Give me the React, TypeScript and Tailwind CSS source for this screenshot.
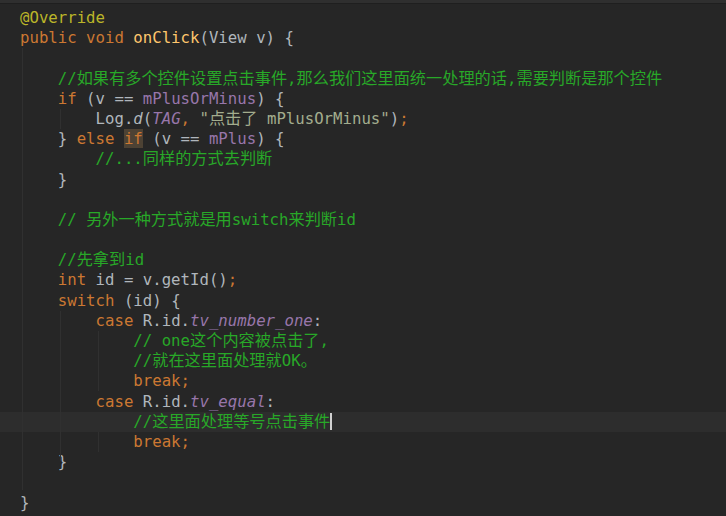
import React from 'react';

// Darcula-ish palette taken from the screenshot
const K = ({ children }: { children: React.ReactNode }) => (
  <span className="text-[#cc7832]">{children}</span>
);
const C = ({ children }: { children: React.ReactNode }) => (
  <span className="text-[#28a828]">{children}</span>
);
const F = ({ children }: { children: React.ReactNode }) => (
  <span className="text-[#9876aa]">{children}</span>
);
const FI = ({ children }: { children: React.ReactNode }) => (
  <span className="text-[#9876aa] italic">{children}</span>
);
// CJK text is a bit wider than the mono font
const Z = ({ children }: { children: React.ReactNode }) => (
  <span className="text-[16.2px]">{children}</span>
);

const Line = ({ children, active }: { children?: React.ReactNode; active?: boolean }) => (
  <div className={`h-[20.2px] pl-[20px] whitespace-pre ${active ? 'bg-[#2d2d2d]' : ''}`}>
    {children}
  </div>
);

const App = () => {
  return (
    <div
      className="relative w-[726px] h-[516px] overflow-hidden bg-[#262626] text-[#b0b6bc] text-[15.7px] leading-[20.2px]"
      style={{ fontFamily: '"DejaVu Sans Mono", "Noto Sans CJK SC", monospace' }}
    >
      <div className="h-[4px] bg-[#2f2f2f] border-b border-[#1f1f1f]" />

      {/* indent guides */}
      <div className="absolute left-[22px] top-[48px] h-[442px] w-px bg-[#303030]" />
      <div className="absolute left-[60px] top-[109px] h-[20px] w-px bg-[#303030]" />
      <div className="absolute left-[60px] top-[311px] h-[150px] w-px bg-[#303030]" />
      <div className="absolute left-[98px] top-[331px] h-[60px] w-px bg-[#303030]" />
      <div className="absolute left-[98px] top-[432px] h-[20px] w-px bg-[#303030]" />

      <div className="pt-[4px]">
        <Line><span className="text-[#bbb529]">@Override</span></Line>
        <Line><K>public void </K><span className="text-[#ffc66d]">onClick</span>(View v) {'{'}</Line>
        <Line />
        <Line>
          {'    '}<C>//<Z>如果有多个控件设置点击事件</Z>,<Z>那么我们这里面统一处理的话</Z>,<Z>需要判断是那个控件</Z></C>
        </Line>
        <Line>{'    '}<K>if</K> (v == <F>mPlusOrMinus</F>) {'{'}</Line>
        <Line>
          {'        '}Log.<span className="italic">d</span>(<FI>TAG</FI><K>, </K>
          <span className="text-[#a3ad8e]">"<Z>点击了</Z> mPlusOrMinus"</span>)<K>;</K>
        </Line>
        <Line>
          {'    '}{'} '}<K>else </K><span className="text-[#cc7832] bg-[#4d4234]">if</span> (v == <F>mPlus</F>) {'{'}
        </Line>
        <Line>{'        '}<C>//...<Z>同样的方式去判断</Z></C></Line>
        <Line>{'    }'}</Line>
        <Line />
        <Line>{'    '}<C>// <Z>另外一种方式就是用</Z>switch<Z>来判断</Z>id</C></Line>
        <Line />
        <Line>{'    '}<C>//<Z>先拿到</Z>id</C></Line>
        <Line>{'    '}<K>int </K>id = v.getId()<K>;</K></Line>
        <Line>{'    '}<K>switch </K>(id) {'{'}</Line>
        <Line>{'        '}<K>case </K>R.id.<FI>tv_number_one</FI>:</Line>
        <Line>{'            '}<C>// one<Z>这个内容被点击了</Z>,</C></Line>
        <Line>{'            '}<C>//<Z>就在这里面处理就</Z>OK<Z>。</Z></C></Line>
        <Line>{'            '}<K>break;</K></Line>
        <Line>{'        '}<K>case </K>R.id.<FI>tv_equal</FI>:</Line>
        <Line active>
          {'            '}<C>//<Z>这里面处理等号点击事件</Z></C>
          <span className="inline-block w-[2px] h-[17px] bg-[#d0d0d0] align-[-3px]" />
        </Line>
        <Line>{'            '}<K>break;</K></Line>
        <Line>{'    }'}</Line>
        <Line />
        <Line>{'}'}</Line>
      </div>
    </div>
  );
};

export default App;
